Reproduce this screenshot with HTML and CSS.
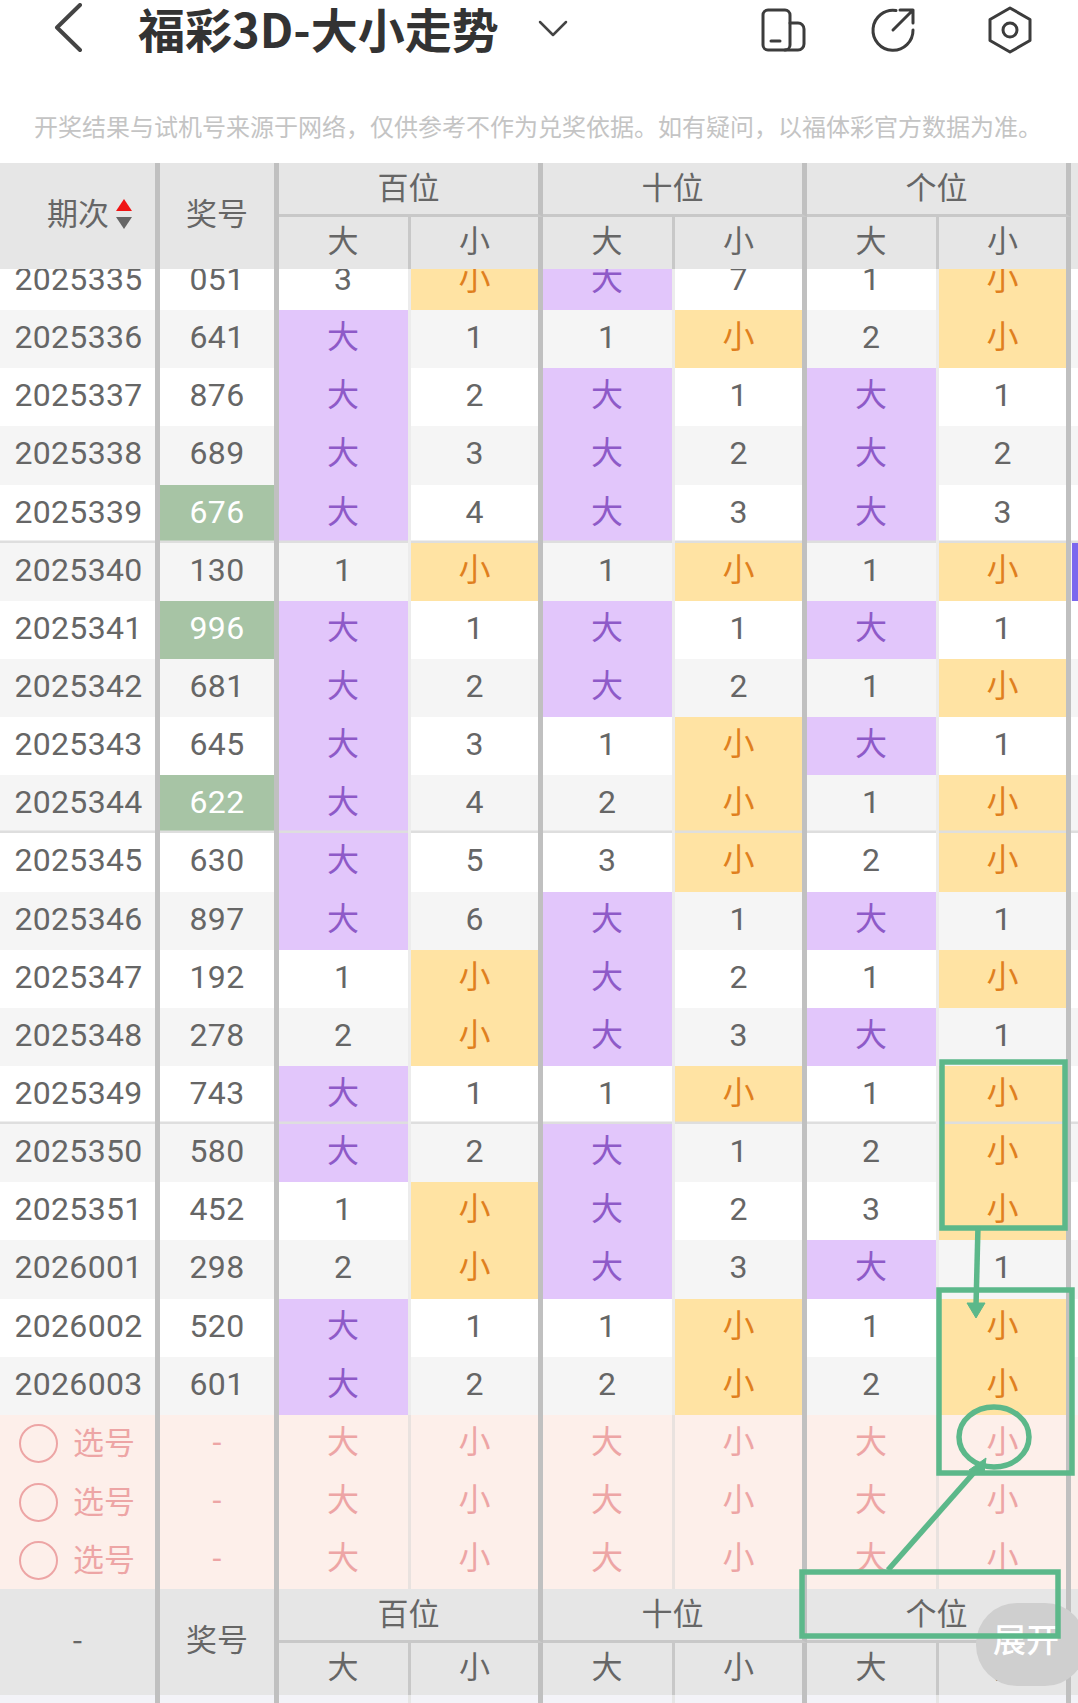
FILE: index.html
```html
<!DOCTYPE html>
<html lang="zh-CN">
<head>
<meta charset="utf-8">
<title>福彩3D-大小走势</title>
<link rel="stylesheet" href="styles.css">
</head>
<body>
<div class="page">
  <header class="topbar">
    <svg class="ic-back" viewBox="0 0 30 50"><path d="M26 2 3 24.5 26 47"/></svg>
    <h1 class="title">福彩3D-大小走势</h1>
    <svg class="ic-down" viewBox="0 0 30 18"><path d="M2 2 15 15 28 2"/></svg>
    <svg class="ic ic-device" viewBox="0 0 45 44"><rect x="2" y="2" width="27" height="40" rx="5"/><path d="M29 15h8a6 6 0 0 1 6 6v15a6 6 0 0 1-6 6H24"/><path d="M10 33h9"/></svg>
    <svg class="ic ic-share" viewBox="0 0 46 46"><path d="M26 3.5A20 20 0 1 0 43 23"/><path d="M23 23 43 3M30 3h13v13"/></svg>
    <svg class="ic ic-hex" viewBox="0 0 44 48"><path d="M22 2 42 13.5V34.500L22 46 2 34.500V13.500Z"/><circle cx="22" cy="24" r="7"/></svg>
  </header>
  <p class="notice">开奖结果与试机号来源于网络，仅供参考不作为兑奖依据。如有疑问，以福体彩官方数据为准。</p>

  <div class="head">
    <div class="q span sorted"><span>期次</span><i class="sort"><b class="up"></b><b class="dn"></b></i></div>
    <div class="h span">奖号</div>
    <div class="grp">百位</div><div class="grp">十位</div><div class="grp">个位</div>
    <div class="e span"></div>
    <div class="a">大</div><div class="b">小</div><div class="a">大</div><div class="b">小</div><div class="a">大</div><div class="b">小</div>
  </div>

  <div class="body">
    <div class="rows">
      <div class="row"><div class="q">2025335</div><div class="h">051</div><div class="a">3</div><div class="b x">小</div><div class="a d">大</div><div class="b">7</div><div class="a">1</div><div class="b x">小</div><div class="e"></div></div>
      <div class="row"><div class="q">2025336</div><div class="h">641</div><div class="a d">大</div><div class="b">1</div><div class="a">1</div><div class="b x">小</div><div class="a">2</div><div class="b x">小</div><div class="e"></div></div>
      <div class="row"><div class="q">2025337</div><div class="h">876</div><div class="a d">大</div><div class="b">2</div><div class="a d">大</div><div class="b">1</div><div class="a d">大</div><div class="b">1</div><div class="e"></div></div>
      <div class="row"><div class="q">2025338</div><div class="h">689</div><div class="a d">大</div><div class="b">3</div><div class="a d">大</div><div class="b">2</div><div class="a d">大</div><div class="b">2</div><div class="e"></div></div>
      <div class="row l"><div class="q">2025339</div><div class="h g">676</div><div class="a d">大</div><div class="b">4</div><div class="a d">大</div><div class="b">3</div><div class="a d">大</div><div class="b">3</div><div class="e"></div></div>
      <div class="row"><div class="q">2025340</div><div class="h">130</div><div class="a">1</div><div class="b x">小</div><div class="a">1</div><div class="b x">小</div><div class="a">1</div><div class="b x">小</div><div class="e"><i class="mark"></i></div></div>
      <div class="row"><div class="q">2025341</div><div class="h g">996</div><div class="a d">大</div><div class="b">1</div><div class="a d">大</div><div class="b">1</div><div class="a d">大</div><div class="b">1</div><div class="e"></div></div>
      <div class="row"><div class="q">2025342</div><div class="h">681</div><div class="a d">大</div><div class="b">2</div><div class="a d">大</div><div class="b">2</div><div class="a">1</div><div class="b x">小</div><div class="e"></div></div>
      <div class="row"><div class="q">2025343</div><div class="h">645</div><div class="a d">大</div><div class="b">3</div><div class="a">1</div><div class="b x">小</div><div class="a d">大</div><div class="b">1</div><div class="e"></div></div>
      <div class="row l"><div class="q">2025344</div><div class="h g">622</div><div class="a d">大</div><div class="b">4</div><div class="a">2</div><div class="b x">小</div><div class="a">1</div><div class="b x">小</div><div class="e"></div></div>
      <div class="row"><div class="q">2025345</div><div class="h">630</div><div class="a d">大</div><div class="b">5</div><div class="a">3</div><div class="b x">小</div><div class="a">2</div><div class="b x">小</div><div class="e"></div></div>
      <div class="row"><div class="q">2025346</div><div class="h">897</div><div class="a d">大</div><div class="b">6</div><div class="a d">大</div><div class="b">1</div><div class="a d">大</div><div class="b">1</div><div class="e"></div></div>
      <div class="row"><div class="q">2025347</div><div class="h">192</div><div class="a">1</div><div class="b x">小</div><div class="a d">大</div><div class="b">2</div><div class="a">1</div><div class="b x">小</div><div class="e"></div></div>
      <div class="row"><div class="q">2025348</div><div class="h">278</div><div class="a">2</div><div class="b x">小</div><div class="a d">大</div><div class="b">3</div><div class="a d">大</div><div class="b">1</div><div class="e"></div></div>
      <div class="row l"><div class="q">2025349</div><div class="h">743</div><div class="a d">大</div><div class="b">1</div><div class="a">1</div><div class="b x">小</div><div class="a">1</div><div class="b x">小</div><div class="e"></div></div>
      <div class="row"><div class="q">2025350</div><div class="h">580</div><div class="a d">大</div><div class="b">2</div><div class="a d">大</div><div class="b">1</div><div class="a">2</div><div class="b x">小</div><div class="e"></div></div>
      <div class="row"><div class="q">2025351</div><div class="h">452</div><div class="a">1</div><div class="b x">小</div><div class="a d">大</div><div class="b">2</div><div class="a">3</div><div class="b x">小</div><div class="e"></div></div>
      <div class="row"><div class="q">2026001</div><div class="h">298</div><div class="a">2</div><div class="b x">小</div><div class="a d">大</div><div class="b">3</div><div class="a d">大</div><div class="b">1</div><div class="e"></div></div>
      <div class="row"><div class="q">2026002</div><div class="h">520</div><div class="a d">大</div><div class="b">1</div><div class="a">1</div><div class="b x">小</div><div class="a">1</div><div class="b x">小</div><div class="e"></div></div>
      <div class="row"><div class="q">2026003</div><div class="h">601</div><div class="a d">大</div><div class="b">2</div><div class="a">2</div><div class="b x">小</div><div class="a">2</div><div class="b x">小</div><div class="e"></div></div>
      <div class="row p"><div class="q"><i class="radio"></i><span>选号</span></div><div class="h">-</div><div class="a">大</div><div class="b">小</div><div class="a">大</div><div class="b">小</div><div class="a">大</div><div class="b">小</div><div class="e"></div></div>
      <div class="row p"><div class="q"><i class="radio"></i><span>选号</span></div><div class="h">-</div><div class="a">大</div><div class="b">小</div><div class="a">大</div><div class="b">小</div><div class="a">大</div><div class="b">小</div><div class="e"></div></div>
      <div class="row p"><div class="q"><i class="radio"></i><span>选号</span></div><div class="h">-</div><div class="a">大</div><div class="b">小</div><div class="a">大</div><div class="b">小</div><div class="a">大</div><div class="b">小</div><div class="e"></div></div>
    </div>
  </div>

  <div class="head">
    <div class="q span">-</div>
    <div class="h span">奖号</div>
    <div class="grp">百位</div><div class="grp">十位</div><div class="grp">个位</div>
    <div class="e span"></div>
    <div class="a">大</div><div class="b">小</div><div class="a">大</div><div class="b">小</div><div class="a">大</div><div class="b">小</div>
  </div>
  <div class="tail"><div class="q"></div><div class="h"></div><div class="a"></div><div class="b"></div><div class="a"></div><div class="b"></div><div class="a"></div><div class="b"></div><div class="e"></div></div>

  <div class="pill">展开</div>

  <svg class="notes" viewBox="0 0 1078 1703">
    <rect x="942" y="1062" width="123" height="166"/>
    <rect x="939" y="1290" width="133" height="183"/>
    <rect x="802" y="1572" width="256" height="64"/>
    <ellipse cx="994" cy="1437" rx="35" ry="30"/>
    <path d="M978 1226 976 1306"/>
    <path class="head-fill" d="M967 1303H985L976 1318Z"/>
    <path d="M888 1570 978 1468"/>
    <path class="head-fill" d="M969 1470 986 1458 984 1473Z"/>
  </svg>
</div>
</body>
</html>
```
FILE: styles.css
```css
* { box-sizing: border-box; }
html, body { margin: 0; padding: 0; background: #fff; }
.page {
  position: relative;
  width: 1078px;
  height: 1703px;
  overflow: hidden;
  font-family: Roboto, "Noto Sans CJK SC", sans-serif;
  color: #666;
}

/* top bar */
.topbar { display: flex; align-items: center; height: 56px; padding-left: 54px; }
.topbar svg { fill: none; stroke-linecap: round; stroke-linejoin: round; flex: none; }
.ic-back { width: 30px; height: 50px; stroke: #444; stroke-width: 4; }
.title {
  margin: 0 0 0 54px;
  font: 700 47px/56px "Noto Sans CJK SC", sans-serif;
  color: #333;
  white-space: nowrap;
}
.ic-down { width: 30px; height: 18px; margin-left: 39px; stroke: #444; stroke-width: 2.5; margin-top: 2px; }
.ic { stroke: #3c3c3c; stroke-width: 3; }
.ic-device { width: 45px; height: 44px; margin-left: 193px; margin-top: 4px; }
.ic-share { width: 46px; height: 46px; margin-left: 64px; margin-top: 4px; }
.ic-hex { width: 44px; height: 48px; margin-left: 72px; margin-top: 4px; }

.notice {
  margin: 0;
  padding: 54px 0 21px 34px;
  font: 400 24px/32px "Noto Sans CJK SC", sans-serif;
  color: #c4c4c4;
  white-space: nowrap;
}

/* shared columns */
.head, .row, .tail {
  display: grid;
  grid-template-columns: 160px 119px repeat(6, 132px) 7px;
}
.q, .h, .a, .b, .e, .grp {
  display: flex;
  align-items: center;
  justify-content: center;
  font-size: 32px;
  line-height: 1;
}
.q, .h { border-right: 5px solid #c0c0c0; }
.a { border-right: 3px solid #e6e6e6; padding-right: 1px; }
.b { border-right: 5px solid #c0c0c0; }

/* header + footer band */
.head {
  grid-template-rows: 54px 52px;
  background: #e6e6e6;
  font-family: "Noto Sans CJK SC", sans-serif;
}
.head .q, .head .h, .head .a, .head .b, .head .grp, .head .e {
  font-family: "Noto Sans CJK SC", sans-serif;
  font-size: 31px;
  padding-bottom: 10px;
}
.head .grp { padding-bottom: 7px; }
.head .span { grid-row: span 2; padding-bottom: 9px; }
.head .grp { grid-column: span 2; border-right: 5px solid #c0c0c0; border-bottom: 3px solid #c8c8c8; }
.head .a { border-right-color: #c8c8c8; }
.head .q.sorted { gap: 8px; padding-left: 24px; }

.sort { display: flex; flex-direction: column; gap: 6px; margin-left: -1px; margin-top: 4px; }
.sort b { display: block; width: 0; height: 0; border-left: 8px solid transparent; border-right: 8px solid transparent; }
.sort .up { border-bottom: 12px solid #f01414; }
.sort .dn { border-top: 12px solid #666; }

/* scrolling body */
.body { height: 1320px; overflow: hidden; }
.rows { margin-top: -17px; }
.row { height: 58.15px; background: #fff; }
.row:nth-child(even) { background: #f5f5f5; }
.row .q, .row .h, .row .a, .row .b { padding-bottom: 4px; }
.row .q { letter-spacing: 0.3px; padding-left: 2px; }
.row .h { letter-spacing: 0.3px; }
.row.l > div { box-shadow: inset 0 -2.5px 0 #dedede; }
.row .a { border-right-color: #ececec; }
.d { background: #e2c6fb; color: #8e5ac8; }
.x { background: #ffe3a3; color: #e0801e; }
.row .g { background: #a7c4a5; color: #fff; }
.mark { display: block; width: 6px; height: 100%; margin-left: 1px; background: #7b68ee; }
.e { justify-content: flex-start; align-items: stretch; }

/* pick rows */
.row.p { background: #fdefea; color: #eda5a5; }
.row.p .a { border-right-color: #e9e2df; }
.row.p .q { justify-content: flex-start; padding: 0 0 0 19px; gap: 15px; font-family: "Noto Sans CJK SC", sans-serif; font-size: 31px; letter-spacing: 0; }
.row.p .q span { margin-bottom: 6px; }
.radio { display: block; width: 39px; height: 39px; border: 2.5px solid #eda5a5; border-radius: 50%; flex: none; }

.tail { height: 8px; background: #f3f3f8; }

/* expand pill */
.pill {
  position: absolute;
  left: 976px;
  top: 1603px;
  width: 110px;
  height: 83px;
  padding-left: 17px;
  border-radius: 41px;
  background: #cfcfcf;
  color: #fff;
  font: 500 33px/70px "Noto Sans CJK SC", sans-serif;
  white-space: nowrap;
}

/* hand-drawn annotations */
.notes { position: absolute; left: 0; top: 0; width: 1078px; height: 1703px; fill: none; stroke: #5cb88a; stroke-width: 5.5; }
.notes .head-fill { fill: #5cb88a; stroke-width: 1; }
```
